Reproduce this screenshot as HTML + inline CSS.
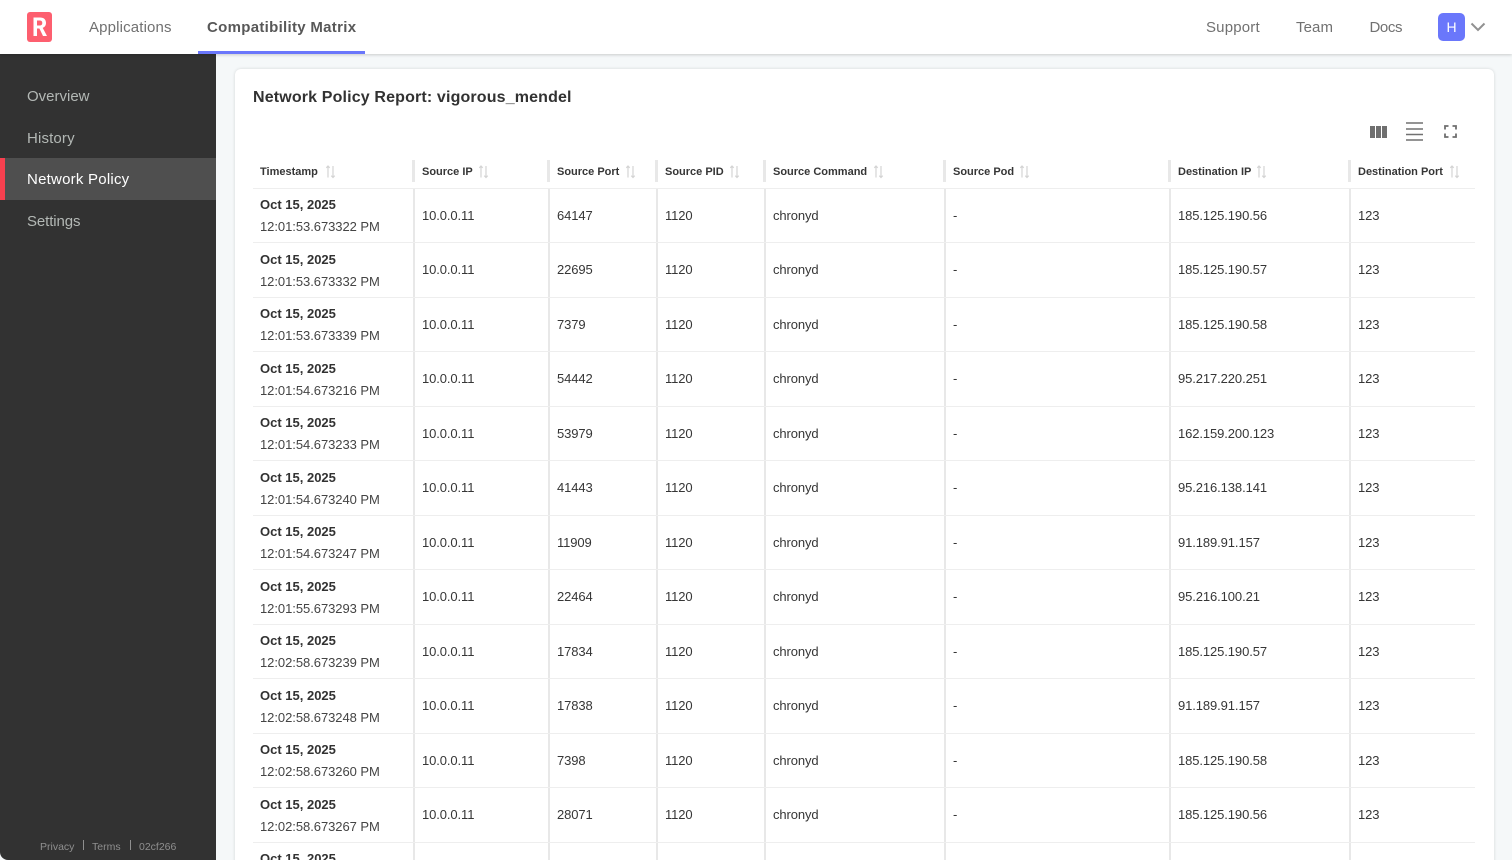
<!DOCTYPE html>
<html lang="en">
<head>
<meta charset="utf-8">
<title>Network Policy Report</title>
<style>
html,body{margin:0;padding:0;width:1512px;height:860px;overflow:hidden}
#page{width:1512px;height:860px;overflow:hidden;position:relative;background:#f5f8f9;font-family:"Liberation Sans",sans-serif;color:#323232}
.a{position:absolute;white-space:nowrap}
#top{position:absolute;left:0;top:0;width:1512px;height:54px;background:#fff;box-shadow:0 1px 3px rgba(0,0,0,.18);z-index:3}
.nav{font-size:15px;line-height:20px;top:18px;color:#717171}
#side{position:absolute;left:0;top:54px;width:216px;height:806px;background:#323232;border-bottom-left-radius:8px;z-index:2}
.si{left:27px;font-size:15px;line-height:20px;color:#b3b8b5}
#card{position:absolute;left:235px;top:69px;width:1259px;height:830px;background:#fff;border-radius:6px;box-shadow:0 0 3px rgba(0,0,0,.14)}
#tbl{position:absolute;left:253px;top:160px;width:1222px}
.h,.r{display:flex;box-sizing:border-box}
.h{height:28.5px;border-bottom:1px solid #eee}
.r{height:54.5px;border-bottom:1px solid #eee}
.c{box-sizing:border-box;padding-left:7px;font-size:13px;line-height:54px;color:#363636;letter-spacing:-.1px;white-space:nowrap;border-left:2px solid #e8e8e8}
.c1{width:160px}.c2{width:135px}.c3{width:108px}.c4{width:108px}.c5{width:180px}.c6{width:225px}.c7{width:180px}.c8{width:126px}
.r .c1{border-left:0;padding-left:7px;line-height:22px;padding-top:5.5px;letter-spacing:-.05px;color:#444}
.r .c1 b{display:block;font-weight:700;letter-spacing:0;color:#323232}
.h .c{position:relative;border-left:0;padding-left:9px;padding-bottom:4px;font-size:11px;font-weight:700;line-height:24px;letter-spacing:0;display:flex;align-items:center}
.h .c:not(.c1):before{content:"";position:absolute;left:-1px;top:0;width:3px;height:22px;background:#e8e8e8}
.h .c1{padding-left:7px}
.h svg{margin-left:6px}
</style>
</head>
<body>
<div id="page">
<div id="top">
  <svg class="a" style="left:27px;top:12px" width="25" height="30" viewBox="0 0 25 30"><rect width="25" height="30" rx="3" fill="#fd5f6f"/><path d="M6.500 24V5.500h6.500c3.800 0 6 2 6 5.400 0 2.500-1.200 4.300-3.300 5L20 24h-4l-3.600-7.500H10V24zM10 13.500h2.600c1.800 0 2.700-.9 2.700-2.500s-.9-2.500-2.700-2.500H10z" fill="#fff"/></svg>
  <div class="a nav" style="left:89px;letter-spacing:.15px">Applications</div>
  <div class="a nav" style="left:207px;font-weight:700;color:#585858;letter-spacing:.3px">Compatibility Matrix</div>
  <div class="a" style="left:198px;top:51px;width:167px;height:3px;background:#6a77fb"></div>
  <div class="a nav" style="left:1206px;letter-spacing:.18px">Support</div>
  <div class="a nav" style="left:1296px;letter-spacing:.1px">Team</div>
  <div class="a nav" style="left:1369.500px;letter-spacing:-.4px">Docs</div>
  <div class="a" style="left:1438px;top:13px;width:27px;height:28px;border-radius:5px;background:#6a77fb;color:#fff;font-size:14px;line-height:28px;text-align:center">H</div>
  <svg class="a" style="left:1470px;top:22px" width="16" height="11" viewBox="0 0 16 11"><path d="M1.500 1.500 8 8l6.500-6.500" fill="none" stroke="#919191" stroke-width="2"/></svg>
</div>
<div id="side">
  <div class="a" style="left:0;top:104px;width:216px;height:42px;background:#4f4f4f"></div>
  <div class="a" style="left:0;top:104px;width:5px;height:42px;background:#f7404f"></div>
  <div class="a si" style="top:33px">Overview</div>
  <div class="a si" style="top:75px;letter-spacing:.15px">History</div>
  <div class="a si" style="top:116px;color:#fff;letter-spacing:.23px">Network Policy</div>
  <div class="a si" style="top:158px;letter-spacing:-.1px">Settings</div>
  <div class="a" style="left:40px;top:786px;font-size:10.500px;line-height:14px;color:#8f8f8f">Privacy</div>
  <div class="a" style="left:83px;top:786px;width:1px;height:10px;background:#8f8f8f"></div>
  <div class="a" style="left:92px;top:786px;font-size:10.500px;line-height:14px;color:#8f8f8f">Terms</div>
  <div class="a" style="left:130px;top:786px;width:1px;height:10px;background:#8f8f8f"></div>
  <div class="a" style="left:139px;top:786px;font-size:10.500px;line-height:14px;color:#8f8f8f">02cf266</div>
</div>
<div id="card"></div>
<div class="a" style="left:253px;top:87px;font-size:16px;line-height:21px;font-weight:700;color:#323232;letter-spacing:.15px">Network Policy Report: vigorous_mendel</div>
<svg class="a" style="left:1370px;top:126px" width="17" height="12" viewBox="0 0 17 12"><path d="M0 0h5v12H0zM6 0h5v12H6zM12 0h5v12h-5z" fill="#6f6f6f"/></svg>
<svg class="a" style="left:1406px;top:122px" width="17" height="19" viewBox="0 0 17 19"><path d="M0 1h17M0 7h17M0 12.500h17M0 18h17" stroke="#717171" stroke-width="1.500"/></svg>
<svg class="a" style="left:1444px;top:125px" width="13" height="13" viewBox="0 0 13 13"><path d="M1 4.500V1h3.500M8.500 1H12v3.500M12 8.500V12H8.500M4.500 12H1V8.500" fill="none" stroke="#6f6f6f" stroke-width="1.800"/></svg>
<svg width="0" height="0" style="position:absolute"><defs><g id="s"><path d="M2 12.500V1M.3 2.800 2 1l1.700 1.800M7 1v11.500M5.300 10.700 7 12.500l1.700-1.800" fill="none" stroke="#d4d4d4" stroke-width="1.200"/></g></defs></svg>
<div id="tbl">
<div class="h">
<div class="c c1">Timestamp<svg style="margin-left:8px" width="10" height="14"><use href="#s"/></svg></div>
<div class="c c2">Source IP<svg style="margin-left:6px" width="10" height="14"><use href="#s"/></svg></div>
<div class="c c3">Source Port<svg style="margin-left:7px" width="10" height="14"><use href="#s"/></svg></div>
<div class="c c4">Source PID<svg style="margin-left:6px" width="10" height="14"><use href="#s"/></svg></div>
<div class="c c5">Source Command<svg style="margin-left:7px" width="10" height="14"><use href="#s"/></svg></div>
<div class="c c6">Source Pod<svg style="margin-left:6px" width="10" height="14"><use href="#s"/></svg></div>
<div class="c c7">Destination IP<svg style="margin-left:6px" width="10" height="14"><use href="#s"/></svg></div>
<div class="c c8">Destination Port<svg style="margin-left:7px" width="10" height="14"><use href="#s"/></svg></div>
</div>
<div class="r"><div class="c c1"><b>Oct 15, 2025</b>12:01:53.673322 PM</div><div class="c c2">10.0.0.11</div><div class="c c3">64147</div><div class="c c4">1120</div><div class="c c5">chronyd</div><div class="c c6">-</div><div class="c c7">185.125.190.56</div><div class="c c8">123</div></div>
<div class="r"><div class="c c1"><b>Oct 15, 2025</b>12:01:53.673332 PM</div><div class="c c2">10.0.0.11</div><div class="c c3">22695</div><div class="c c4">1120</div><div class="c c5">chronyd</div><div class="c c6">-</div><div class="c c7">185.125.190.57</div><div class="c c8">123</div></div>
<div class="r"><div class="c c1"><b>Oct 15, 2025</b>12:01:53.673339 PM</div><div class="c c2">10.0.0.11</div><div class="c c3">7379</div><div class="c c4">1120</div><div class="c c5">chronyd</div><div class="c c6">-</div><div class="c c7">185.125.190.58</div><div class="c c8">123</div></div>
<div class="r"><div class="c c1"><b>Oct 15, 2025</b>12:01:54.673216 PM</div><div class="c c2">10.0.0.11</div><div class="c c3">54442</div><div class="c c4">1120</div><div class="c c5">chronyd</div><div class="c c6">-</div><div class="c c7">95.217.220.251</div><div class="c c8">123</div></div>
<div class="r"><div class="c c1"><b>Oct 15, 2025</b>12:01:54.673233 PM</div><div class="c c2">10.0.0.11</div><div class="c c3">53979</div><div class="c c4">1120</div><div class="c c5">chronyd</div><div class="c c6">-</div><div class="c c7">162.159.200.123</div><div class="c c8">123</div></div>
<div class="r"><div class="c c1"><b>Oct 15, 2025</b>12:01:54.673240 PM</div><div class="c c2">10.0.0.11</div><div class="c c3">41443</div><div class="c c4">1120</div><div class="c c5">chronyd</div><div class="c c6">-</div><div class="c c7">95.216.138.141</div><div class="c c8">123</div></div>
<div class="r"><div class="c c1"><b>Oct 15, 2025</b>12:01:54.673247 PM</div><div class="c c2">10.0.0.11</div><div class="c c3">11909</div><div class="c c4">1120</div><div class="c c5">chronyd</div><div class="c c6">-</div><div class="c c7">91.189.91.157</div><div class="c c8">123</div></div>
<div class="r"><div class="c c1"><b>Oct 15, 2025</b>12:01:55.673293 PM</div><div class="c c2">10.0.0.11</div><div class="c c3">22464</div><div class="c c4">1120</div><div class="c c5">chronyd</div><div class="c c6">-</div><div class="c c7">95.216.100.21</div><div class="c c8">123</div></div>
<div class="r"><div class="c c1"><b>Oct 15, 2025</b>12:02:58.673239 PM</div><div class="c c2">10.0.0.11</div><div class="c c3">17834</div><div class="c c4">1120</div><div class="c c5">chronyd</div><div class="c c6">-</div><div class="c c7">185.125.190.57</div><div class="c c8">123</div></div>
<div class="r"><div class="c c1"><b>Oct 15, 2025</b>12:02:58.673248 PM</div><div class="c c2">10.0.0.11</div><div class="c c3">17838</div><div class="c c4">1120</div><div class="c c5">chronyd</div><div class="c c6">-</div><div class="c c7">91.189.91.157</div><div class="c c8">123</div></div>
<div class="r"><div class="c c1"><b>Oct 15, 2025</b>12:02:58.673260 PM</div><div class="c c2">10.0.0.11</div><div class="c c3">7398</div><div class="c c4">1120</div><div class="c c5">chronyd</div><div class="c c6">-</div><div class="c c7">185.125.190.58</div><div class="c c8">123</div></div>
<div class="r"><div class="c c1"><b>Oct 15, 2025</b>12:02:58.673267 PM</div><div class="c c2">10.0.0.11</div><div class="c c3">28071</div><div class="c c4">1120</div><div class="c c5">chronyd</div><div class="c c6">-</div><div class="c c7">185.125.190.56</div><div class="c c8">123</div></div>
<div class="r"><div class="c c1"><b>Oct 15, 2025</b></div><div class="c c2"></div><div class="c c3"></div><div class="c c4"></div><div class="c c5"></div><div class="c c6"></div><div class="c c7"></div><div class="c c8"></div></div>
</div>
</div>
</body>
</html>
